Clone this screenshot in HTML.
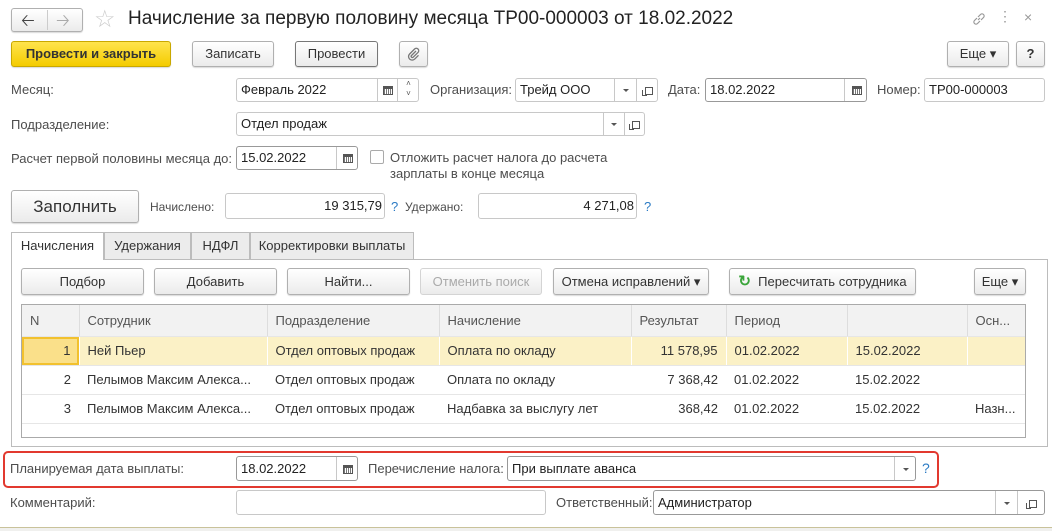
<!DOCTYPE html>
<html><head><meta charset="utf-8"><style>
*{box-sizing:border-box}
body{margin:0;width:1052px;height:531px;overflow:hidden;background:#fff;font-family:"Liberation Sans",Arial,sans-serif;font-size:13px;color:#333;position:relative}
.a{position:absolute;white-space:nowrap}
.lbl{color:#4d4d4d}
.btn{position:absolute;border:1px solid #b0b0b0;border-radius:3px;background:linear-gradient(#fff,#ebebeb);box-shadow:0 1px 1px rgba(0,0,0,.15);text-align:center;color:#333}
.fld{position:absolute;border:1px solid #c8c8c8;border-radius:3px;background:#fff;color:#222;padding-left:4px;overflow:hidden}
.seg{position:absolute;top:0;bottom:0;border-left:1px solid #c8c8c8;text-align:center;color:#555}
.dd:after{content:"";position:absolute;left:50%;top:50%;margin:-1px 0 0 -3px;border:3px solid transparent;border-top:3px solid #555}
.cal{position:absolute;left:50%;top:50%;width:10px;height:9px;margin:-4px 0 0 -5px;border:1px solid #555;border-top-width:3px;background:repeating-linear-gradient(90deg,#777 0 1px,#fff 1px 2px)}
.open{position:absolute;left:50%;top:50%;width:8px;height:8px;margin:-3px 0 0 -3px;border:1px solid #555}
.open:before{content:"";position:absolute;left:-4px;top:2px;width:4px;height:5px;border-left:1px solid #555;border-bottom:1px solid #555}
.q{position:absolute;color:#2b7bc4;font-size:13px}
.tab{position:absolute;top:232px;height:27px;border:1px solid #bcbcbc;border-bottom:none;background:#ececec;text-align:center;line-height:25px;color:#333}
table{border-collapse:collapse}
.grid td{height:29px;border-bottom:1px solid #e6e6e6;padding:0 8px;white-space:nowrap;overflow:hidden;color:#333}
.grid tr.h td{background:#f2f2f2;color:#555;border-right:1px solid #ddd;height:31px}
.grid tr.s td{background:#fbf1c6;border-right:1px solid #fff}
</style></head><body>
<!-- header -->
<div class="btn" style="left:11px;top:8px;width:72px;height:24px"></div>
<div class="a" style="left:47px;top:10px;width:1px;height:20px;background:#ccc"></div>
<div class="a" style="left:21px;top:8px;font-size:17px;color:#444">&#129120;</div>
<div class="a" style="left:56px;top:8px;font-size:17px;color:#aaa">&#129122;</div>
<div class="a" style="left:94px;top:5px;font-size:24px;color:#ccc">☆</div>
<div class="a" style="left:128px;top:8px;font-size:19px;color:#222">Начисление за первую половину месяца ТР00-000003 от 18.02.2022</div>
<svg class="a" style="left:971px;top:11px" width="16" height="16" viewBox="0 0 16 16" fill="none" stroke="#999" stroke-width="1.2"><path d="M7 9 L9 7"/><path d="M6 7 L3.5 9.5 a2.1 2.1 0 0 0 3 3 L9 10"/><path d="M10 9 L12.5 6.5 a2.1 2.1 0 0 0 -3 -3 L7 6"/></svg>
<div class="a" style="left:998px;top:8px;font-size:14px;color:#999">⋮</div>
<div class="a" style="left:1024px;top:9px;font-size:14px;color:#999">×</div>
<!-- toolbar -->
<div class="btn" style="left:11px;top:41px;width:160px;height:26px;background:linear-gradient(#ffe44d,#f4cc00);border-color:#c9a800;font-weight:bold;line-height:24px;color:#333">Провести и закрыть</div>
<div class="btn" style="left:192px;top:41px;width:82px;height:26px;line-height:24px">Записать</div>
<div class="btn" style="left:295px;top:41px;width:83px;height:26px;line-height:24px;border-color:#777">Провести</div>
<div class="btn" style="left:399px;top:41px;width:29px;height:26px"><svg style="margin-top:5px" width="14" height="14" viewBox="0 0 14 14" fill="none" stroke="#777" stroke-width="1.3"><path d="M9 4 L4.5 8.5 a1.2 1.2 0 0 0 1.7 1.7 L11 5.4 a2.4 2.4 0 0 0 -3.4 -3.4 L2.6 7 a3.6 3.6 0 0 0 5.1 5.1 L11.5 8.3"/></svg></div>
<div class="btn" style="left:947px;top:41px;width:62px;height:26px;line-height:24px">Еще ▾</div>
<div class="btn" style="left:1016px;top:41px;width:29px;height:26px;line-height:24px;font-weight:bold">?</div>
<!-- row1 -->
<div class="a lbl" style="left:11px;top:82px">Месяц:</div>
<div class="fld" style="left:236px;top:78px;width:183px;height:24px;line-height:22px">Февраль 2022<div class="seg" style="left:140px;width:20px"><div class="cal"></div></div><div class="seg" style="left:160px;width:22px;font-size:8px;line-height:10px">˄<br>˅</div></div>
<div class="a lbl" style="left:430px;top:82px">Организация:</div>
<div class="fld" style="left:515px;top:78px;width:143px;height:24px;line-height:22px">Трейд ООО<div class="seg dd" style="left:98px;width:22px"></div><div class="seg" style="left:120px;width:22px"><div class="open"></div></div></div>
<div class="a lbl" style="left:668px;top:82px">Дата:</div>
<div class="fld" style="left:705px;top:78px;width:162px;height:24px;line-height:22px;border-color:#999">18.02.2022<div class="seg" style="left:138px;width:24px"><div class="cal"></div></div></div>
<div class="a lbl" style="left:877px;top:82px">Номер:</div>
<div class="fld" style="left:924px;top:78px;width:121px;height:24px;line-height:22px">ТР00-000003</div>
<!-- row2 -->
<div class="a lbl" style="left:11px;top:117px">Подразделение:</div>
<div class="fld" style="left:236px;top:112px;width:409px;height:24px;line-height:22px">Отдел продаж<div class="seg dd" style="left:366px;width:21px"></div><div class="seg" style="left:387px;width:21px"><div class="open"></div></div></div>
<!-- row3 -->
<div class="a lbl" style="left:11px;top:151px">Расчет первой половины месяца до:</div>
<div class="fld" style="left:236px;top:146px;width:122px;height:24px;line-height:22px;border-color:#999">15.02.2022<div class="seg" style="left:99px;width:22px"><div class="cal"></div></div></div>
<div class="a" style="left:370px;top:150px;width:14px;height:14px;border:1px solid #aaa;border-radius:2px"></div>
<div class="a lbl" style="left:390px;top:150px;line-height:16px">Отложить расчет налога до расчета<br>зарплаты в конце месяца</div>
<!-- fill row -->
<div class="btn" style="left:11px;top:190px;width:128px;height:33px;line-height:31px;font-size:17px">Заполнить</div>
<div class="a lbl" style="left:150px;top:200px;font-size:12px">Начислено:</div>
<div class="fld" style="left:225px;top:193px;width:160px;height:26px;line-height:24px;text-align:right;padding-right:2px">19 315,79</div>
<div class="q" style="left:391px;top:199px">?</div>
<div class="a lbl" style="left:405px;top:200px;font-size:12px">Удержано:</div>
<div class="fld" style="left:478px;top:193px;width:159px;height:26px;line-height:24px;text-align:right;padding-right:2px">4 271,08</div>
<div class="q" style="left:644px;top:199px">?</div>
<!-- tabs -->
<div class="a" style="left:11px;top:259px;width:1037px;height:188px;border:1px solid #bcbcbc"></div>
<div class="tab" style="left:11px;width:93px;background:#fff;height:28px">Начисления</div>
<div class="tab" style="left:104px;width:87px">Удержания</div>
<div class="tab" style="left:191px;width:59px">НДФЛ</div>
<div class="tab" style="left:250px;width:164px">Корректировки выплаты</div>
<!-- table toolbar -->
<div class="btn" style="left:21px;top:268px;width:123px;height:27px;line-height:25px">Подбор</div>
<div class="btn" style="left:154px;top:268px;width:123px;height:27px;line-height:25px">Добавить</div>
<div class="btn" style="left:287px;top:268px;width:123px;height:27px;line-height:25px">Найти...</div>
<div class="btn" style="left:420px;top:268px;width:122px;height:27px;line-height:25px;color:#aaa;border-color:#d4d4d4;box-shadow:none">Отменить поиск</div>
<div class="btn" style="left:553px;top:268px;width:156px;height:27px;line-height:25px">Отмена исправлений ▾</div>
<div class="btn" style="left:729px;top:268px;width:187px;height:27px;line-height:25px"><span style="color:#3aa53a;font-weight:bold;font-size:15px">↻</span>&nbsp; Пересчитать сотрудника</div>
<div class="btn" style="left:974px;top:268px;width:52px;height:27px;line-height:25px">Еще ▾</div>
<!-- grid -->
<div class="a" style="left:21px;top:304px;width:1005px;height:134px;border:1px solid #aaa;overflow:hidden">
<table class="grid" style="width:1003px;table-layout:fixed">
<colgroup><col style="width:57px"><col style="width:188px"><col style="width:172px"><col style="width:192px"><col style="width:95px"><col style="width:121px"><col style="width:120px"><col style="width:58px"></colgroup>
<tr class="h"><td>N</td><td>Сотрудник</td><td>Подразделение</td><td>Начисление</td><td>Результат</td><td>Период</td><td></td><td>Осн...</td></tr>
<tr class="s"><td style="text-align:right;background:#fae08a;box-shadow:inset 0 0 0 2px #f2c12e">1</td><td>Ней Пьер</td><td>Отдел оптовых продаж</td><td>Оплата по окладу</td><td style="text-align:right">11 578,95</td><td>01.02.2022</td><td>15.02.2022</td><td></td></tr>
<tr><td style="text-align:right">2</td><td>Пелымов Максим Алекса...</td><td>Отдел оптовых продаж</td><td>Оплата по окладу</td><td style="text-align:right">7 368,42</td><td>01.02.2022</td><td>15.02.2022</td><td></td></tr>
<tr><td style="text-align:right">3</td><td>Пелымов Максим Алекса...</td><td>Отдел оптовых продаж</td><td>Надбавка за выслугу лет</td><td style="text-align:right">368,42</td><td>01.02.2022</td><td>15.02.2022</td><td>Назн...</td></tr>
</table></div>
<!-- red box -->
<div class="a" style="left:3px;top:451px;width:936px;height:37px;border:2px solid #e2392f;border-radius:5px"></div>
<div class="a lbl" style="left:10px;top:461px">Планируемая дата выплаты:</div>
<div class="fld" style="left:236px;top:456px;width:122px;height:25px;line-height:23px;border-color:#999">18.02.2022<div class="seg" style="left:99px;width:22px"><div class="cal"></div></div></div>
<div class="a lbl" style="left:368px;top:461px">Перечисление налога:</div>
<div class="fld" style="left:507px;top:456px;width:409px;height:25px;line-height:23px;border-color:#999">При выплате аванса<div class="seg dd" style="left:386px;width:22px"></div></div>
<div class="q" style="left:922px;top:460px;font-size:14px">?</div>
<!-- comment -->
<div class="a lbl" style="left:10px;top:495px">Комментарий:</div>
<div class="fld" style="left:236px;top:490px;width:310px;height:25px"></div>
<div class="a lbl" style="left:556px;top:495px">Ответственный:</div>
<div class="fld" style="left:653px;top:490px;width:392px;height:25px;line-height:23px;border-color:#999">Администратор<div class="seg dd" style="left:341px;width:22px"></div><div class="seg" style="left:363px;width:28px"><div class="open"></div></div></div>
<div class="a" style="left:0;top:527px;width:1052px;height:4px;background:#f0f0ee;border-top:1px solid #c9c29a"></div>
</body></html>
